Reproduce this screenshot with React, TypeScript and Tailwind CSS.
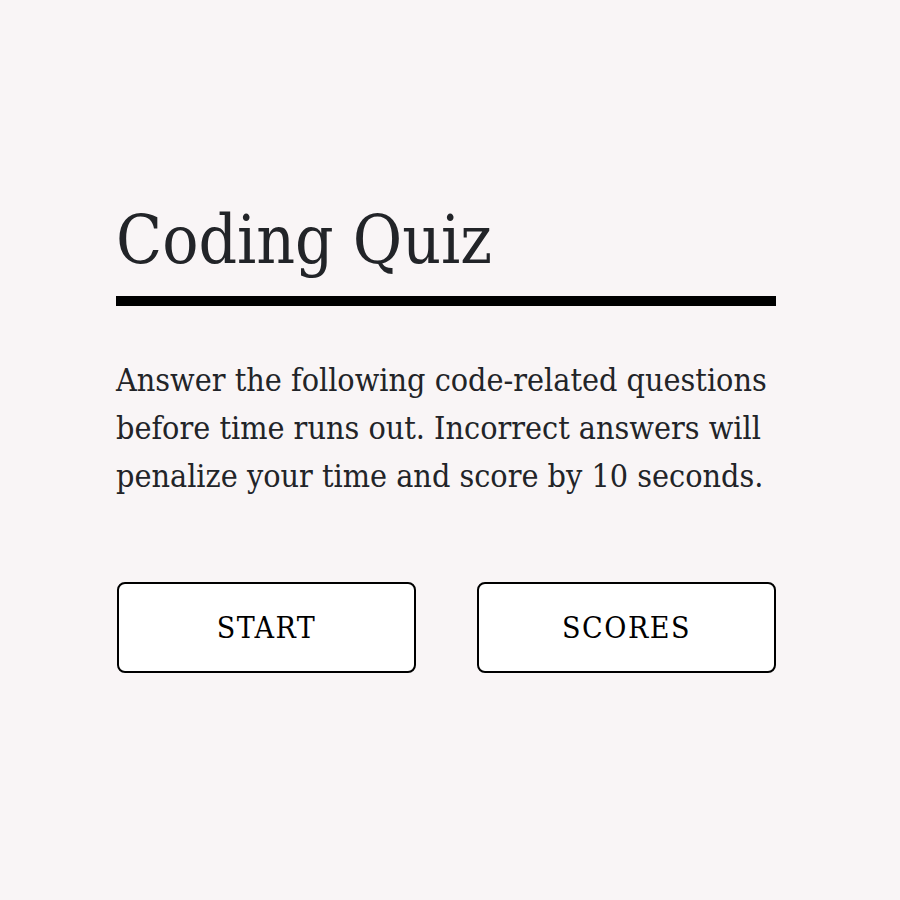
export default function App() {
  return (
    <div
      className="min-h-[900px] w-full bg-[#f9f5f6] text-[#222428]"
      style={{ fontFamily: '"DejaVu Serif Condensed", "DejaVu Serif", serif' }}
    >
      <main className="ml-[116px] w-[660px] pt-[196px]">
        <h1 className="text-[67px] leading-[88px] border-b-[10px] border-black pb-[12px]">
          Coding Quiz
        </h1>
        <p className="mt-[50px] text-[32px] leading-[48px]">
          Answer the following code-related questions before time runs out.
          Incorrect answers will penalize your time and score by 10 seconds.
        </p>
        <div className="mt-[82px] flex gap-[61px] pl-px">
          <button className="h-[91px] w-[299px] rounded-lg border-2 border-black bg-white text-[30px] tracking-wider text-black">
            START
          </button>
          <button className="h-[91px] w-[299px] rounded-lg border-2 border-black bg-white text-[30px] tracking-wider text-black">
            SCORES
          </button>
        </div>
      </main>
    </div>
  );
}
